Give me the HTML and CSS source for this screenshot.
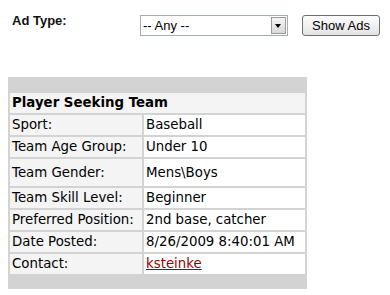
FILE: index.html
```html
<!DOCTYPE html>
<html lang="en">
<head>
    <meta charset="UTF-8">
    <meta name="viewport" content="width=device-width, initial-scale=1.0">
    <title>Player Ads</title>
    <link rel="stylesheet" href="styles.css">
</head>
<body>
    <div class="filter">
        <div class="filter-label">Ad Type:</div>
        <div class="select-wrap">
            <select class="ad-select">
                <option>-- Any --</option>
                <option>Player Seeking Team</option>
                <option>Team Seeking Player</option>
            </select>
            <span class="select-arrow"></span>
        </div>
        <button class="show-btn">Show Ads</button>
    </div>

    <table class="ad-table">
        <tr class="filler-top"><td colspan="2"></td></tr>
        <tr>
            <th colspan="2">Player Seeking Team</th>
        </tr>
        <tr>
            <td class="key">Sport:</td>
            <td class="val">Baseball</td>
        </tr>
        <tr>
            <td class="key">Team Age Group:</td>
            <td class="val">Under 10</td>
        </tr>
        <tr class="tall">
            <td class="key">Team Gender:</td>
            <td class="val">Mens\Boys</td>
        </tr>
        <tr>
            <td class="key">Team Skill Level:</td>
            <td class="val">Beginner</td>
        </tr>
        <tr>
            <td class="key">Preferred Position:</td>
            <td class="val">2nd base, catcher</td>
        </tr>
        <tr>
            <td class="key">Date Posted:</td>
            <td class="val">8/26/2009 8:40:01 AM</td>
        </tr>
        <tr>
            <td class="key">Contact:</td>
            <td class="val"><a href="#">ksteinke</a></td>
        </tr>
        <tr class="filler-bottom"><td colspan="2"></td></tr>
    </table>
</body>
</html>
```

FILE: styles.css
```css
body {
    margin: 0;
    background-color: #fff;
    font-family: "DejaVu Sans", Verdana, sans-serif;
    color: #000;
}
.filter {
    display: flex;
    align-items: flex-start;
    padding: 15px 0 0 12px;
}
.filter-label {
    width: 128px;
    margin-top: -2px;
    font-family: "Liberation Sans", Arial, sans-serif;
    font-size: 13px;
    font-weight: bold;
    line-height: 16px;
    color: #111;
}
.select-wrap {
    position: relative;
    width: 148px;
    height: 21px;
    margin-right: 14px;
}
.ad-select {
    appearance: none;
    -webkit-appearance: none;
    width: 148px;
    height: 21px;
    margin: 0;
    padding: 0 0 0 2px;
    border: 1px solid #a5acb2;
    border-radius: 0;
    background-color: #fff;
    font-family: "Liberation Sans", Arial, sans-serif;
    font-size: 13px;
    color: #000;
}
.select-arrow {
    position: absolute;
    top: 2px;
    right: 2px;
    width: 15px;
    height: 17px;
    box-sizing: border-box;
    border: 1px solid #9a9a9a;
    background: linear-gradient(#f4f4f4, #d8d8d8);
    pointer-events: none;
}
.select-arrow::after {
    content: "";
    position: absolute;
    left: 3px;
    top: 6px;
    border-left: 3.5px solid transparent;
    border-right: 3.5px solid transparent;
    border-top: 4px solid #000;
}
.show-btn {
    width: 78px;
    height: 21px;
    margin: 0;
    padding: 0;
    border: 1px solid #707070;
    border-radius: 3px;
    background: linear-gradient(#fdfdfd, #e3e3e3);
    font-family: "Liberation Sans", Arial, sans-serif;
    font-size: 13px;
    color: #000;
}
.ad-table {
    margin: 41px 0 0 8px;
    width: 299px;
    border-spacing: 2px;
    background-color: #d3d3d3;
    font-size: 13.33px;
    line-height: 16px;
}
.ad-table th,
.ad-table td {
    padding: 2px;
    text-align: left;
    vertical-align: middle;
}
.ad-table th {
    background-color: #f4f4f4;
    font-weight: bold;
}
.ad-table .key {
    width: 128px;
    background-color: #f4f4f4;
}
.ad-table .val {
    background-color: #fff;
}
.ad-table .tall td {
    height: 23px;
}
.ad-table .filler-top td {
    height: 12px;
    padding: 0;
}
.ad-table .filler-bottom td {
    height: 11px;
    padding: 0;
}
.ad-table a {
    color: #990000;
}
```
